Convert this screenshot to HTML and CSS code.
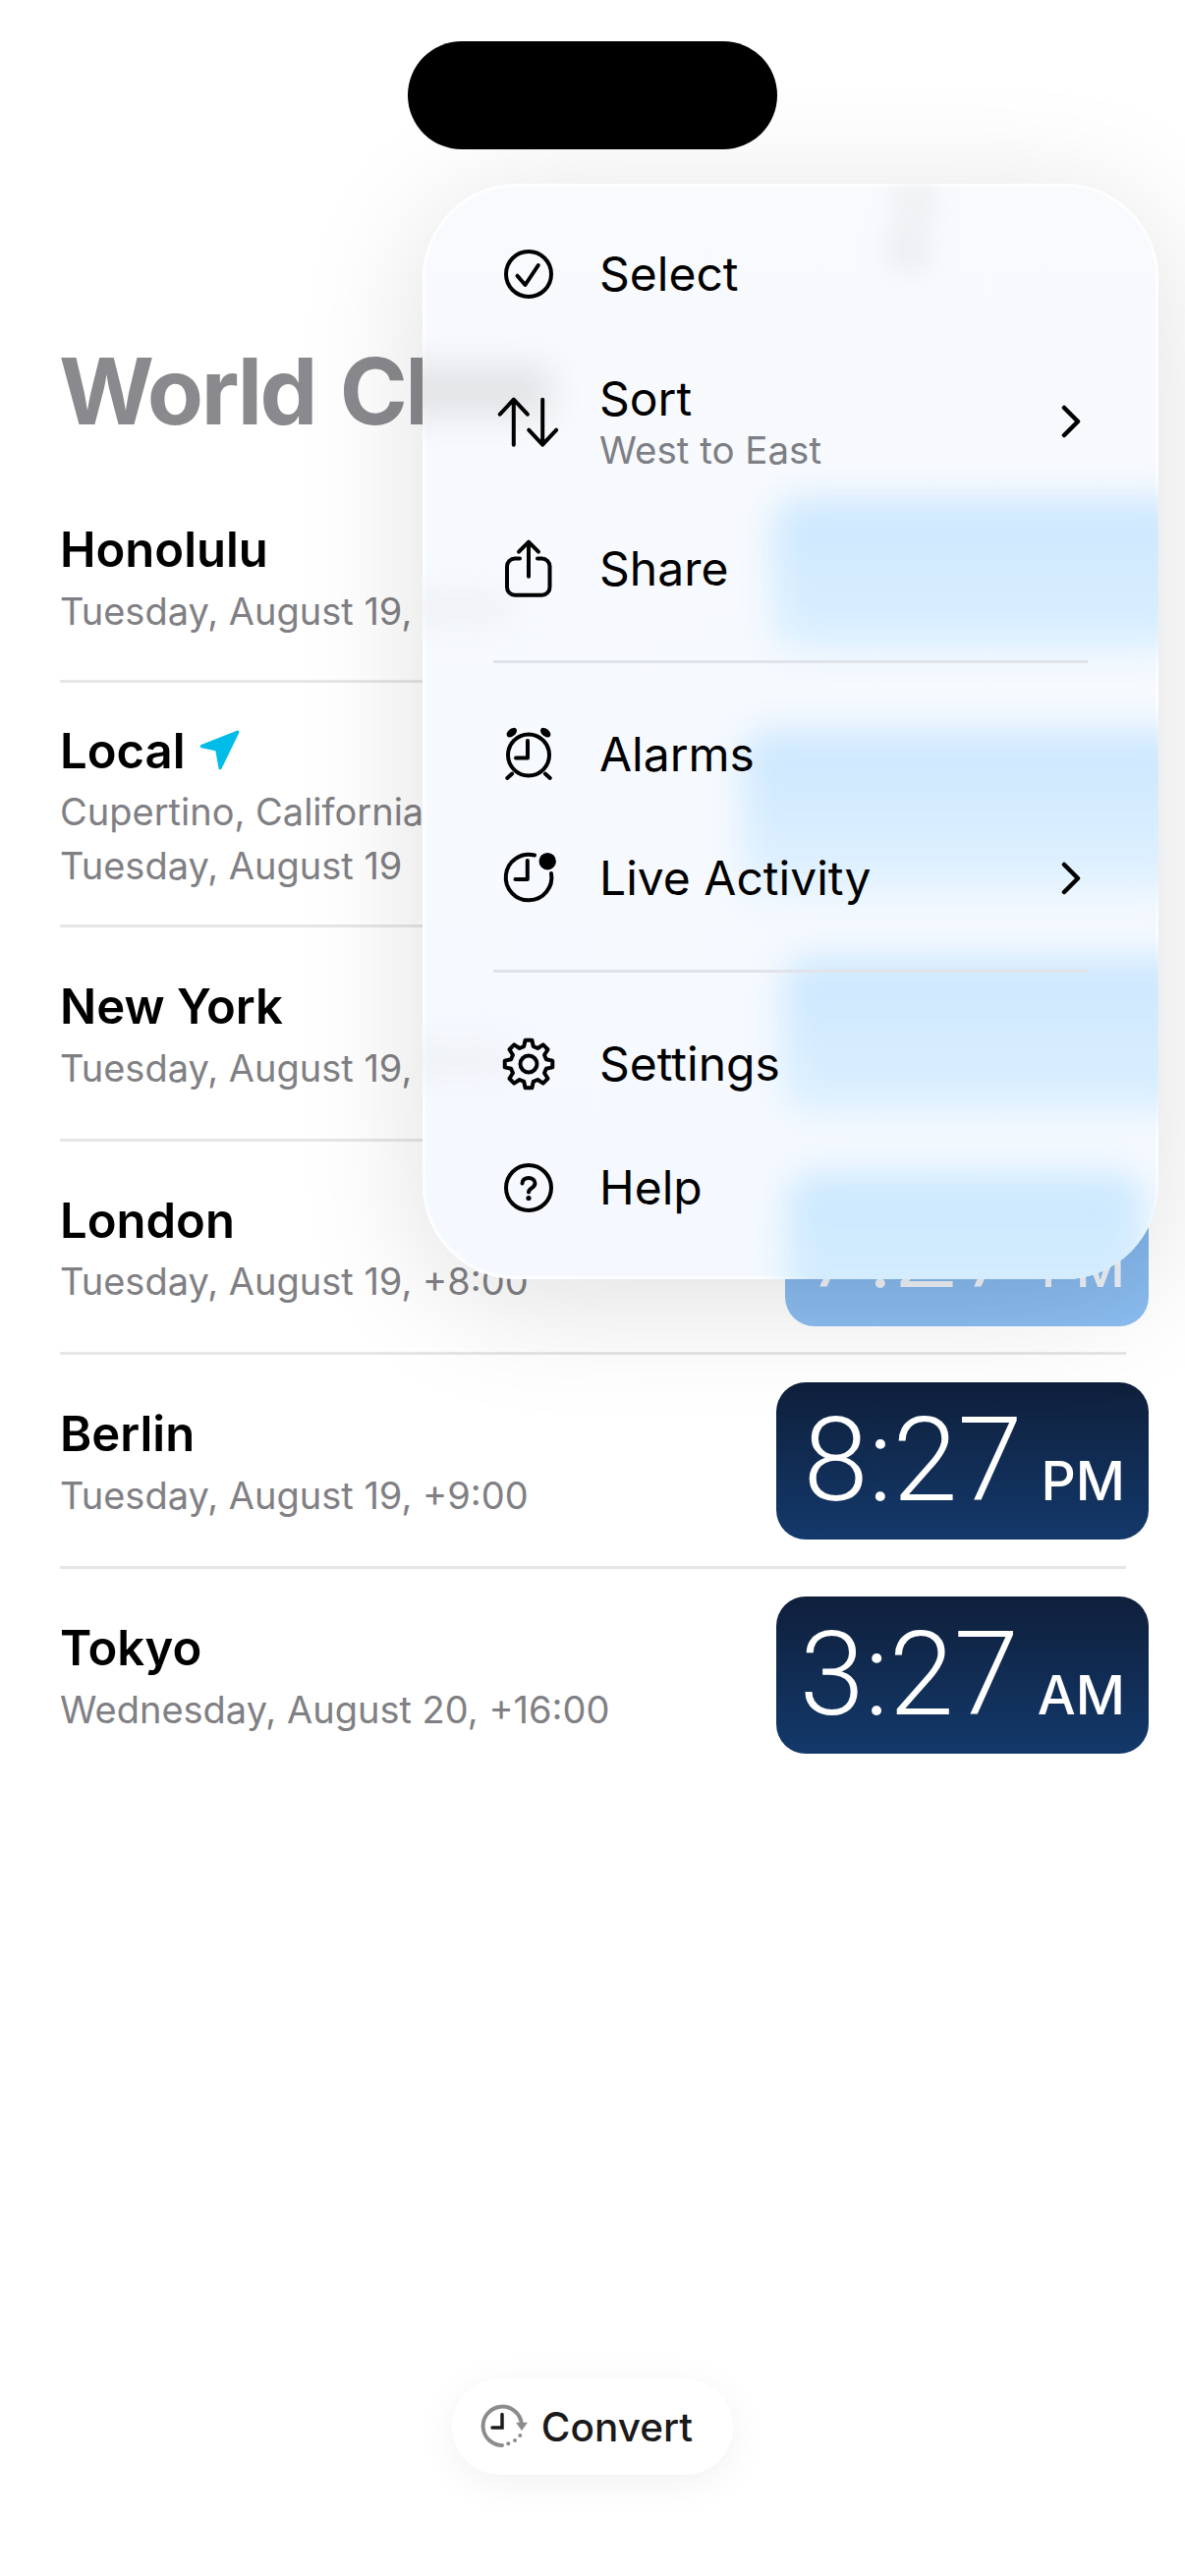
FILE: index.html
```html
<!DOCTYPE html>
<html lang="en">
<head>
    <meta charset="UTF-8">
    <meta name="viewport" content="width=device-width, initial-scale=1.0">
    <title>World Clock</title>
    <link rel="stylesheet" href="styles.css">
</head>
<body>
<div class="screen">

    <div class="island"></div>

    <h1 class="page-title">World Clock</h1>

    <!-- City rows -->
    <div class="city-list">
        <div class="row">
            <div class="city">
                <div class="city-name">Honolulu</div>
                <div class="city-sub">Tuesday, August 19, -3:00</div>
            </div>
            <div class="time"><span class="digits">8:27</span><span class="ampm">AM</span></div>
        </div>
        <div class="row row-local">
            <div class="city">
                <div class="city-name">Local
                    <svg class="location" viewBox="0 0 40 40"><path d="M4 16 L37 3 L21 36 L18 19 Z" fill="#00bce8" stroke="#00bce8" stroke-width="3" stroke-linejoin="round"/></svg>
                </div>
                <div class="city-sub">Cupertino, California</div>
                <div class="city-sub">Tuesday, August 19</div>
            </div>
            <div class="time"><span class="digits">11:27</span><span class="ampm">AM</span></div>
        </div>
        <div class="row">
            <div class="city">
                <div class="city-name">New York</div>
                <div class="city-sub">Tuesday, August 19, +3:00</div>
            </div>
            <div class="time"><span class="digits">2:27</span><span class="ampm">PM</span></div>
        </div>
        <div class="row">
            <div class="city">
                <div class="city-name">London</div>
                <div class="city-sub">Tuesday, August 19, +8:00</div>
            </div>
            <div class="time time-london"><span class="digits">7:27</span><span class="ampm">PM</span></div>
        </div>
        <div class="row">
            <div class="city">
                <div class="city-name">Berlin</div>
                <div class="city-sub">Tuesday, August 19, +9:00</div>
            </div>
            <div class="time time-dark"><span class="digits">8:27</span><span class="ampm">PM</span></div>
        </div>
        <div class="row">
            <div class="city">
                <div class="city-name">Tokyo</div>
                <div class="city-sub">Wednesday, August 20, +16:00</div>
            </div>
            <div class="time time-dark time-tokyo"><span class="digits">3:27</span><span class="ampm">AM</span></div>
        </div>
    </div>

    <button class="convert">
        <svg class="convert-icon" viewBox="0 0 60 60" fill="none" stroke-linecap="round">
            <path d="M27 49 A19.7 19.7 0 1 1 46.7 26" stroke="#8c8c8c" stroke-width="4"/>
            <path d="M41 25.7 H53 L47 34 Z" fill="#8c8c8c"/>
            <circle cx="33.3" cy="47.3" r="2" fill="#8c8c8c"/>
            <circle cx="40" cy="44" r="2" fill="#8c8c8c"/>
            <circle cx="45.3" cy="39" r="2" fill="#8c8c8c"/>
            <path d="M27 17.5 V31 H17" stroke="#1c1c1c" stroke-width="3.5"/>
        </svg>
        <span>Convert</span>
    </button>

    <!-- Popup menu -->
    <div class="menu">
        <!-- what shows through the glass -->
        <div class="glass">
            <div class="blur blur-plus-a"></div>
            <div class="blur blur-plus-b"></div>
            <div class="blur blur-title"></div>
            <div class="blur blur-sub-a"></div>
            <div class="blur blur-sub-b"></div>
            <div class="blur blur-time blur-time-a"></div>
            <div class="blur blur-time blur-time-b"></div>
            <div class="blur blur-time blur-time-c"></div>
            <div class="blur blur-time blur-time-d"></div>
        </div>

        <div class="menu-item">
            <svg class="menu-icon" viewBox="0 0 70 70"><circle cx="35" cy="35" r="23"/><path d="M23.5 36.7 L31.5 46 L44.8 26"/></svg>
            <span class="menu-label">Select</span>
        </div>
        <div class="menu-item menu-item-tall">
            <svg class="menu-icon" viewBox="0 0 70 70"><path d="M19.8 58.7 V12.7 M5.8 27.7 L19.8 12.7 L33.8 27.7"/><path d="M49.2 12.7 V58.7 M35.2 43.7 L49.2 58.7 L63.2 43.7"/></svg>
            <div class="menu-text">
                <span class="menu-label">Sort</span>
                <span class="menu-sub">West to East</span>
            </div>
            <svg class="chevron" viewBox="0 0 20 34"><path d="M3 3 L17 17 L3 31"/></svg>
        </div>
        <div class="menu-item">
            <svg class="menu-icon" viewBox="0 0 70 70"><path d="M35 42.7 V7.7 M25 17.7 L35 7.7 L45 17.7"/><path d="M26 24.5 H21 a8 8 0 0 0 -8 8 V53.7 a8 8 0 0 0 8 8 H48.5 a8 8 0 0 0 8 -8 V32.5 a8 8 0 0 0 -8 -8 H44"/></svg>
            <span class="menu-label">Share</span>
        </div>

        <div class="menu-divider"></div>

        <div class="menu-item">
            <svg class="menu-icon" viewBox="0 0 70 70">
                <circle cx="35" cy="35.5" r="21"/>
                <path d="M34 21 V38.5 H22"/>
                <path d="M13.2 59 L18.2 54.5 M51.8 54.5 L56.8 59"/>
                <ellipse class="fill" cx="17.8" cy="12.7" rx="6" ry="3.8" transform="rotate(-40 17.8 12.7)"/>
                <ellipse class="fill" cx="52.2" cy="12.7" rx="6" ry="3.8" transform="rotate(40 52.2 12.7)"/>
            </svg>
            <span class="menu-label">Alarms</span>
        </div>
        <div class="menu-item">
            <svg class="menu-icon" viewBox="0 0 70 70">
                <path d="M41 11.5 A23.3 23.3 0 1 0 58 30"/>
                <path d="M33.8 17 V36 H21.5"/>
                <circle class="fill" cx="54.2" cy="17.7" r="8.7"/>
            </svg>
            <span class="menu-label">Live Activity</span>
            <svg class="chevron" viewBox="0 0 20 34"><path d="M3 3 L17 17 L3 31"/></svg>
        </div>

        <div class="menu-divider"></div>

        <div class="menu-item">
            <svg class="menu-icon" viewBox="0 0 70 70">
                <polygon points="30.21,17.13 31.59,10.74 38.41,10.74 39.79,17.13 44.25,18.98 49.74,15.43 54.57,20.26 51.02,25.75 52.87,30.21 59.26,31.59 59.26,38.41 52.87,39.79 51.02,44.25 54.57,49.74 49.74,54.57 44.25,51.02 39.79,52.87 38.41,59.26 31.59,59.26 30.21,52.87 25.75,51.02 20.26,54.57 15.43,49.74 18.98,44.25 17.13,39.79 10.74,38.41 10.74,31.59 17.13,30.21 18.98,25.75 15.43,20.26 20.26,15.43 25.75,18.98"/>
                <circle cx="35" cy="35" r="8.5"/>
            </svg>
            <span class="menu-label">Settings</span>
        </div>
        <div class="menu-item">
            <svg class="menu-icon" viewBox="0 0 70 70">
                <circle cx="35" cy="35" r="23"/>
                <path d="M28.5 30.5 c0 -3.6 2.9 -5.5 6.5 -5.5 s6.5 2.2 6.5 5.5 c0 5 -6.5 4.8 -6.5 9"/>
                <circle class="fill" cx="35" cy="45.5" r="2.6"/>
            </svg>
            <span class="menu-label">Help</span>
        </div>
    </div>

</div>
</body>
</html>
```

FILE: styles.css
```css
body {
    margin: 0;
    background-color: #ffffff;
    font-family: Inter, "Liberation Sans", sans-serif;
}

.screen {
    position: relative;
    width: 1206px;
    height: 2622px;
    overflow: hidden;
    display: flex;
    flex-direction: column;
    background-color: #ffffff;
}

.island {
    position: absolute;
    left: 415px;
    top: 42px;
    width: 376px;
    height: 110px;
    border-radius: 55px;
    background-color: #000000;
}

.page-title {
    margin: 338px 0 22px 60px;
    height: 120px;
    line-height: 120px;
    font-size: 93.5px;
    font-weight: 700;
    letter-spacing: -2.5px;
    word-spacing: 5px;
    color: #8a8a8e;
    white-space: nowrap;
}

.city-list {
    margin: 0 60px 0 61px;
}

.row {
    height: 217.6px;
    box-sizing: border-box;
    display: flex;
    align-items: center;
    justify-content: space-between;
    border-bottom: 3px solid #e6e6e9;
}

.row:first-child {
    height: 215px;
}

.row-local {
    height: 249px;
}

.row:last-child {
    height: 214.6px;
    border-bottom: none;
}

.city {
    padding-top: 2px;
}

.city-name {
    display: flex;
    align-items: center;
    gap: 12px;
    height: 70px;
    font-size: 49px;
    font-weight: 600;
    color: #000000;
}

.location {
    width: 44px;
    height: 44px;
}

.city-sub {
    height: 55px;
    line-height: 55px;
    font-size: 38px;
    color: #808084;
    white-space: nowrap;
}

.time {
    flex-shrink: 0;
    height: 160px;
    margin-top: 2px;
    margin-right: -23px;
    padding: 0 24px 0 28px;
    box-sizing: border-box;
    display: flex;
    align-items: baseline;
    gap: 19px;
    line-height: 160px;
    border-radius: 30px;
    color: #eef2f7;
    background: linear-gradient(#7db0e7, #8cbef1);
}

.time-dark {
    color: #ffffff;
    background: linear-gradient(#0f1f3b, #13396b);
}

.time-london {
    padding-left: 19px;
}

.time-tokyo {
    padding-left: 24px;
}

.digits {
    font-family: Roboto, sans-serif;
    font-size: 119px;
    font-weight: 300;
}

.ampm {
    font-size: 55px;
    font-weight: 500;
}

.convert {
    align-self: center;
    margin-top: auto;
    margin-bottom: 103px;
    height: 98px;
    padding: 0 41px 0 24px;
    display: flex;
    align-items: center;
    gap: 7px;
    border: none;
    border-radius: 49px;
    background-color: #ffffff;
    box-shadow: 0 8px 40px rgba(0, 0, 0, 0.06);
    font-family: inherit;
    font-size: 40.5px;
    font-weight: 500;
    color: #1a1a1a;
}

.convert-icon {
    width: 60px;
    height: 60px;
}

.menu {
    position: absolute;
    left: 430px;
    top: 187px;
    width: 749px;
    height: 1115px;
    box-sizing: border-box;
    padding: 29px 0;
    border-radius: 96px;
    background: linear-gradient(#f8fafd, #f5f9ff);
    box-shadow: 0 20px 130px rgba(0, 0, 0, 0.13);
}

/* blurred backdrop, clipped to the menu shape */
.glass {
    position: absolute;
    inset: 0;
    overflow: hidden;
    border-radius: 96px;
    box-shadow: inset 0 0 0 3px rgba(255, 255, 255, 0.7);
}

.blur {
    position: absolute;
    filter: blur(17px);
}

.blur-plus-a {
    left: 488px;
    top: 8px;
    width: 26px;
    height: 22px;
    border-radius: 11px;
    background-color: #d8d8db;
}

.blur-plus-b {
    left: 482px;
    top: 52px;
    width: 26px;
    height: 30px;
    border-radius: 13px;
    background-color: #d8d9dc;
}

.blur-title {
    left: -30px;
    top: 185px;
    width: 160px;
    height: 52px;
    background-color: #e2e3e6;
}

.blur-sub-a {
    left: -20px;
    top: 420px;
    width: 110px;
    height: 24px;
    background-color: #eceef2;
}

.blur-sub-b {
    left: -20px;
    top: 880px;
    width: 110px;
    height: 24px;
    background-color: #eceef2;
}

.blur-time {
    border-radius: 30px;
    background: linear-gradient(#cce7fe, #dcf0ff);
}

.blur-time-a {
    left: 356px;
    top: 320px;
    width: 430px;
    height: 156px;
}

.blur-time-b {
    left: 325px;
    top: 555px;
    width: 460px;
    height: 173px;
    background: linear-gradient(#cce7fe, #d9eeff 65%, #e6f4ff);
}

.blur-time-c {
    left: 366px;
    top: 786px;
    width: 420px;
    height: 160px;
}

.blur-time-d {
    left: 370px;
    top: 1006px;
    width: 365px;
    height: 160px;
    background: linear-gradient(#cbe8fe, #d8eefe);
}

.menu-item {
    position: relative;
    height: 126px;
    padding: 0 79px 0 73px;
    display: flex;
    align-items: center;
    gap: 37px;
    color: #000000;
}

.menu-item-tall {
    height: 174px;
}

.menu-icon {
    flex-shrink: 0;
    width: 70px;
    height: 70px;
    fill: none;
    stroke: #000000;
    stroke-width: 4;
    stroke-linecap: round;
    stroke-linejoin: round;
}

.menu-icon .fill {
    fill: #000000;
    stroke: none;
}

.menu-text {
    display: flex;
    flex-direction: column;
}

.menu-label {
    font-size: 48px;
    line-height: 58px;
}

.menu-sub {
    font-size: 38.5px;
    line-height: 46px;
    color: #7d7f85;
}

.chevron {
    margin-left: auto;
    width: 20px;
    height: 34px;
    fill: none;
    stroke: #000000;
    stroke-width: 4.5;
    stroke-linecap: round;
    stroke-linejoin: round;
}

.menu-divider {
    position: relative;
    height: 3px;
    margin: 30px 72px;
    background-color: #e0e4ea;
}
```
